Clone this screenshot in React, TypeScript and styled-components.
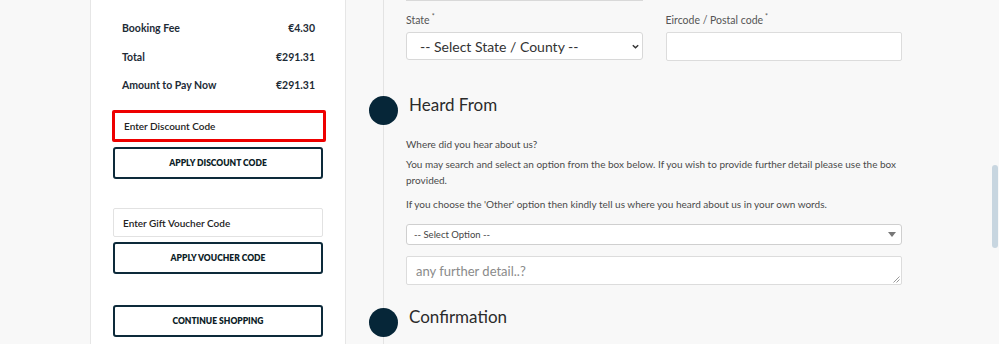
import React from 'react';
import styled, { createGlobalStyle } from 'styled-components';

const GlobalStyle = createGlobalStyle`
    html, body {
        margin: 0;
        padding: 0;
        background: #f8f8f8;
        font-family: Lato, "Open Sans", sans-serif;
        overflow: hidden;
    }
`;

const Page = styled.div`
    display: flex;
    height: 344px;
    padding-left: 90px;
    position: relative;
`;

const Sidebar = styled.aside`
    width: 210px;
    padding: 0 22px;
    background: #ffffff;
    border-left: 1px solid #e6e6e6;
    border-right: 1px solid #e6e6e6;
    display: flex;
    flex-direction: column;
`;

const Totals = styled.div`
    display: flex;
    flex-direction: column;
    gap: 13.5px;
    padding: 21px 8px 0 9px;
`;

const TotalRow = styled.div`
    display: flex;
    justify-content: space-between;
    font-size: 10.5px;
    font-weight: 700;
    color: #1d2b36;
    line-height: 15px;
`;

const CodeInput = styled.input<{ $error?: boolean }>`
    box-sizing: border-box;
    width: ${p => (p.$error ? '214px' : '210px')};
    height: ${p => (p.$error ? '32px' : '29px')};
    margin-left: ${p => (p.$error ? '-1px' : '0')};
    padding: 0 9px;
    border: ${p => (p.$error ? '3px solid #ee0000' : '1px solid #e2e2e2')};
    border-radius: 2px;
    font-family: inherit;
    font-size: 10px;
    font-weight: 600;
    color: #222;
    outline: none;
    &::placeholder {
        color: #222;
    }
`;

const OutlineButton = styled.button`
    box-sizing: border-box;
    width: 210px;
    height: 32px;
    border: 2px solid #0d2a3a;
    border-radius: 3px;
    background: #ffffff;
    font-family: inherit;
    font-size: 8.5px;
    font-weight: 800;
    color: #0d1e28;
    cursor: pointer;
`;

const CodeBlock = styled.div<{ $top: number }>`
    display: flex;
    flex-direction: column;
    gap: 5px;
    margin-top: ${p => p.$top}px;
`;

const Main = styled.main`
    flex: 1;
    padding-left: 37px;
    display: flex;
`;

const Timeline = styled.div`
    border-left: 1px solid #e3e3e3;
    padding-left: 22px;
    width: 496px;
`;

const PrevField = styled.div`
    width: 237px;
    height: 1px;
    background: #d9d9d9;
`;

const FieldRow = styled.div`
    display: flex;
    gap: 23px;
    margin-top: 12px;
`;

const Field = styled.div`
    display: flex;
    flex-direction: column;
    gap: 5px;
    width: 237px;
`;

const Label = styled.label`
    font-size: 10.5px;
    color: #555;
    line-height: 14px;
    sup {
        font-size: 7px;
        line-height: 0;
        vertical-align: top;
        position: relative;
        top: 3px;
        margin-left: 2px;
    }
`;

const StateSelect = styled.div`
    box-sizing: border-box;
    height: 28px;
    border: 1px solid #d8d8d8;
    border-radius: 3px;
    background: #fff;
    display: flex;
    align-items: center;
    justify-content: space-between;
    padding: 0 2px 0 13px;
    font-size: 14px;
    color: #333;
`;

const TextBox = styled.div`
    box-sizing: border-box;
    height: 29px;
    border: 1px solid #dcdcdc;
    border-radius: 2px;
    background: #fff;
`;

const Section = styled.section<{ $top: number }>`
    position: relative;
    margin-top: ${p => p.$top}px;
`;

const Dot = styled.span`
    position: absolute;
    left: -37px;
    top: 2px;
    width: 29px;
    height: 29px;
    border-radius: 50%;
    background: #062638;
`;

const Heading = styled.h2`
    margin: 0;
    padding-left: 3px;
    font-size: 17px;
    font-weight: 400;
    color: #2b2b2b;
    line-height: 22px;
`;

const Text = styled.p<{ $top: number }>`
    margin: ${p => p.$top}px 0 0;
    font-size: 10px;
    line-height: 16px;
    color: #4a4a4a;
`;

const OptionSelect = styled.div`
    box-sizing: border-box;
    margin-top: 12px;
    height: 21px;
    border: 1px solid #cfcfcf;
    border-radius: 3px;
    background: #fff;
    display: flex;
    align-items: center;
    justify-content: space-between;
    padding: 0 5px 0 7px;
    font-size: 9.5px;
    color: #444;
`;

const TextArea = styled.div`
    box-sizing: border-box;
    position: relative;
    margin-top: 11px;
    height: 29px;
    border: 1px solid #dcdcdc;
    border-radius: 2px;
    background: #fff;
    display: flex;
    align-items: center;
    padding-left: 9px;
    font-size: 13px;
    color: #8a8a8a;
`;

const Grip = styled.svg`
    position: absolute;
    right: 1px;
    bottom: 1px;
`;

const Scrollbar = styled.div`
    position: absolute;
    right: 1px;
    top: 165px;
    width: 6px;
    height: 83px;
    border-radius: 3px;
    background: #c8d6e0;
`;

export default function App() {
    return (
        <>
            <GlobalStyle />
            <Page>
                <Sidebar>
                    <Totals>
                        <TotalRow><span>Booking Fee</span><span>€4.30</span></TotalRow>
                        <TotalRow><span>Total</span><span>€291.31</span></TotalRow>
                        <TotalRow><span>Amount to Pay Now</span><span>€291.31</span></TotalRow>
                    </Totals>
                    <CodeBlock $top={17}>
                        <CodeInput $error placeholder="Enter Discount Code" />
                        <OutlineButton>APPLY DISCOUNT CODE</OutlineButton>
                    </CodeBlock>
                    <CodeBlock $top={29}>
                        <CodeInput placeholder="Enter Gift Voucher Code" />
                        <OutlineButton>APPLY VOUCHER CODE</OutlineButton>
                    </CodeBlock>
                    <CodeBlock $top={31}>
                        <OutlineButton>CONTINUE SHOPPING</OutlineButton>
                    </CodeBlock>
                </Sidebar>
                <Main>
                    <Timeline>
                        <PrevField />
                        <FieldRow>
                            <Field>
                                <Label>State<sup>*</sup></Label>
                                <StateSelect>
                                    <span>-- Select State / County --</span>
                                    <svg width="9" height="9" viewBox="0 0 10 10">
                                        <path d="M2 3.5 L5 6.5 L8 3.5" fill="none" stroke="#333" strokeWidth="1.6" />
                                    </svg>
                                </StateSelect>
                            </Field>
                            <Field>
                                <Label>Eircode / Postal code<sup>*</sup></Label>
                                <TextBox />
                            </Field>
                        </FieldRow>
                        <Section $top={33}>
                            <Dot />
                            <Heading>Heard From</Heading>
                            <Text $top={20}>Where did you hear about us?</Text>
                            <Text $top={4}>
                                You may search and select an option from the box below. If you wish to provide further detail please use the box provided.
                            </Text>
                            <Text $top={8}>
                                If you choose the 'Other' option then kindly tell us where you heard about us in your own words.
                            </Text>
                            <OptionSelect>
                                <span>-- Select Option --</span>
                                <svg width="8" height="5" viewBox="0 0 8 5">
                                    <path d="M0 0 L8 0 L4 5 Z" fill="#777" />
                                </svg>
                            </OptionSelect>
                            <TextArea>
                                any further detail..?
                                <Grip width="7" height="7" viewBox="0 0 7 7">
                                    <path d="M6.5 0.5 L0.5 6.5 M6.5 3.5 L3.5 6.5" stroke="#999" strokeWidth="1" />
                                </Grip>
                            </TextArea>
                        </Section>
                        <Section $top={21}>
                            <Dot />
                            <Heading>Confirmation</Heading>
                        </Section>
                    </Timeline>
                </Main>
                <Scrollbar />
            </Page>
        </>
    );
}
